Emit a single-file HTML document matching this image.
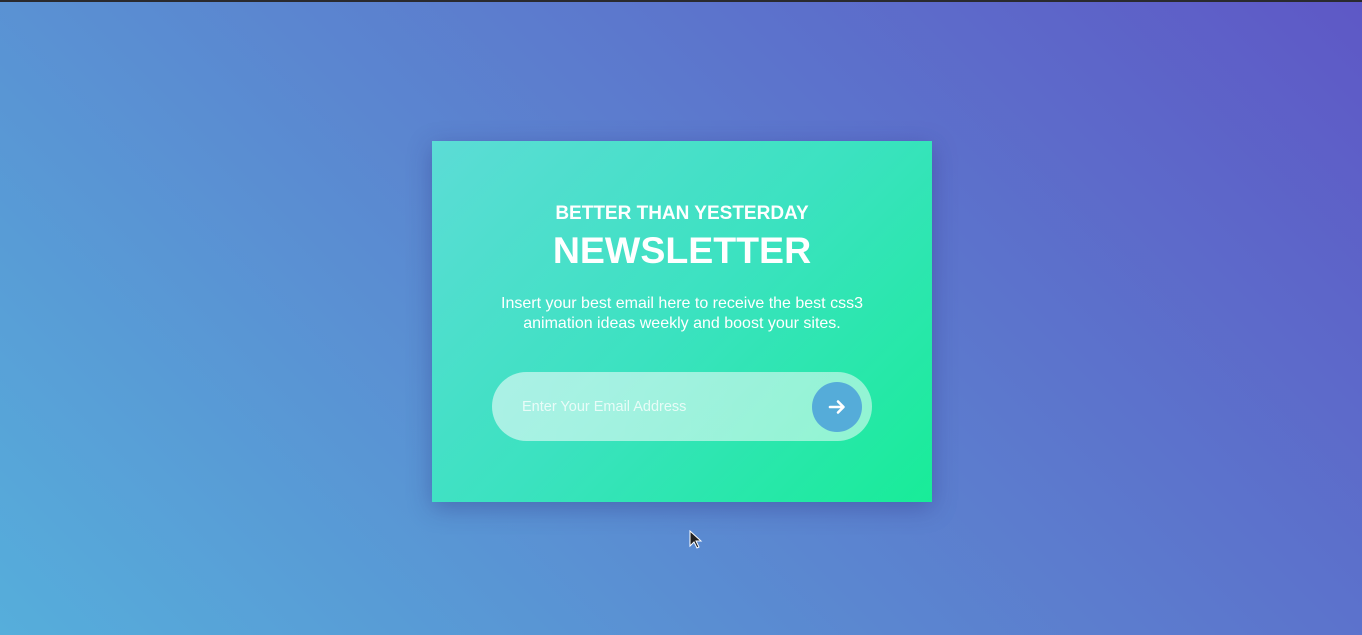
<!DOCTYPE html>
<html><head><style>
html,body{margin:0;padding:0;}
body{width:1362px;height:635px;overflow:hidden;position:relative;font-family:"Liberation Sans",Arial,sans-serif;
background:linear-gradient(45deg,#56aedb 0%,#5b86d0 45%,#5e58c6 100%);}
.top{position:absolute;left:0;top:0;width:100%;height:2px;background:#2a2a2e;}
.card{position:absolute;left:432px;top:141px;width:500px;height:361px;
background:linear-gradient(135deg,#5cdcd6 0%,#3be2c0 50%,#18ec98 100%);box-shadow:0 6px 22px rgba(40,40,120,.35);color:#fff;text-align:center;}
.h1{position:absolute;top:62px;width:100%;font-size:19px;font-weight:bold;}
.h2{position:absolute;top:88px;width:100%;font-size:37.5px;font-weight:bold;}
.p{position:absolute;top:153px;width:100%;font-size:16px;line-height:20px;}
.pill{position:absolute;left:60px;top:231px;width:380px;height:69px;border-radius:35px;background:linear-gradient(90deg,rgba(255,255,255,.55),rgba(255,255,255,.5));}
.ph{position:absolute;left:30px;top:27px;font-size:14.5px;color:rgba(255,255,255,.75);}
.btn{position:absolute;left:320px;top:10px;width:50px;height:50px;border-radius:50%;background:#55acd9;}
</style></head><body>
<div class="top"></div>
<div class="card">
<div class="h1">BETTER THAN YESTERDAY</div>
<div class="h2">NEWSLETTER</div>
<div class="p">Insert your best email here to receive the best css3<br>animation ideas weekly and boost your sites.</div>
<div class="pill"><div class="ph">Enter Your Email Address</div>
<div class="btn"><svg width="50" height="50" viewBox="0 0 50 50"><path d="M18 25h13M26 19.5l5.5 5.5-5.5 5.5" stroke="#fff" stroke-width="2.6" fill="none" stroke-linecap="round" stroke-linejoin="round"/></svg></div></div>
</div>
<svg style="position:absolute;left:689px;top:530px" width="14" height="20" viewBox="0 0 14 20"><path d="M1 1v15l4-4 3 6 2-1-3-6h5z" fill="#222" stroke="#fff" stroke-width="1"/></svg>
</body></html>
